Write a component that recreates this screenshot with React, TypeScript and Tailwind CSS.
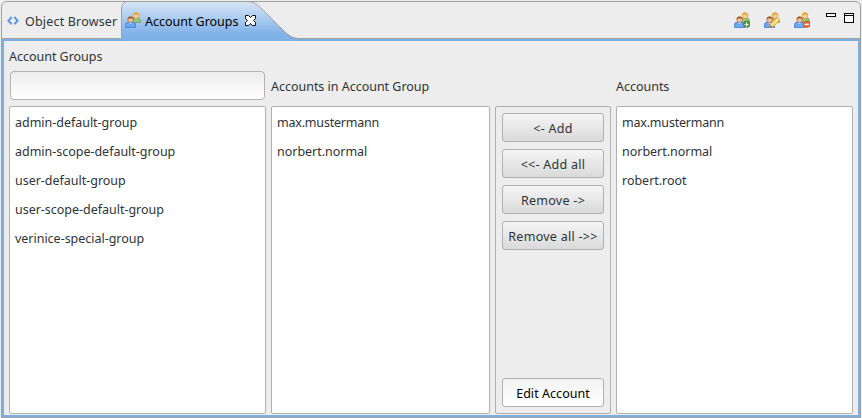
import React from 'react';

type Badge = 'add' | 'edit' | 'remove';

function People({ badge }: { badge?: Badge }) {
  return (
    <svg width="16" height="16" viewBox="0 0 16 16" className="block shrink-0">
      <path d="M7.5 10.5V8.6Q7.5 6 10 6h2.6Q15.5 6 15.5 9v1.5z" fill="#8fc878" stroke="#6aa656" strokeWidth=".8" />
      <circle cx="11" cy="3.8" r="2.8" fill="#f8cf98" stroke="#d9983c" strokeWidth=".7" />
      <path d="M7.9 4.1V3Q8.3.2 11 .2t3.1 2.6v1.5L13 2.7H9.2z" fill="#e8a838" />
      <path d="M.5 15.5V13Q.5 10 3.3 10h4.2q3 0 3 3v2.5z" fill="#68a8f4" stroke="#3f80d2" strokeWidth=".8" />
      <path d="M4 10.2h3l-1.5 2z" fill="#d9eaff" />
      <circle cx="5.6" cy="7.6" r="2.8" fill="#f3c29c" stroke="#b06c40" strokeWidth=".7" />
      <path d="M2.6 7.8V6.8Q3 4.4 5.6 4.4t3.1 2.4V8L7.6 6.6H3.8z" fill="#9a5a32" />
      {badge === 'add' && (
        <g>
          <circle cx="12.7" cy="12.3" r="3.2" fill="#4b9a35" stroke="#36792a" strokeWidth=".6" />
          <path d="M10.6 12.5h4M12.6 10.5v4" stroke="#fff" strokeWidth="1.2" />
        </g>
      )}
      {badge === 'edit' && (
        <g>
          <path d="M5.6 15.4l.9-3.8 6.6-6.1 2.7 2.7-6.5 6.4z" fill="#f9cf5e" stroke="#dba038" strokeWidth=".8" />
          <path d="M8 13l6.2-6" stroke="#fff0a9" strokeWidth="1.2" />
          <path d="M5.6 15.4l.5-1.8 1.5 1.2z" fill="#75502b" />
        </g>
      )}
      {badge === 'remove' && (
        <g>
          <circle cx="12.7" cy="12.3" r="3.3" fill="#ea652e" stroke="#c94515" strokeWidth=".6" />
          <path d="M10.5 12.4h4.3" stroke="#fff" strokeWidth="1.4" />
        </g>
      )}
    </svg>
  );
}

function Header() {
  return (
    <header className="relative flex h-[38px] shrink-0 pt-px">
      <svg width="862" height="41" viewBox="0 0 862 41" className="absolute left-0 top-0">
        <defs>
          <linearGradient id="activeTab" x1="0" y1="0" x2="0" y2="1">
            <stop offset="0" stopColor="#d6e5f6" />
            <stop offset=".8" stopColor="#83b3e8" />
            <stop offset="1" stopColor="#7dafe4" />
          </linearGradient>
        </defs>
        <path d="M1.5 41V7Q2 1.5 7 1.5H855Q860.5 2 860.5 7V41" fill="none" stroke="#a1a1a1" />
        <path d="M1.5 38.5H121M297 38.5H861" stroke="#a1a1a1" />
        <path d="M121.5 41V8Q122 2 128 2H247C255 2 259 6 264 11L283 30C289 36 293 38.5 300 38.5V41z" fill="url(#activeTab)" />
        <path d="M121.5 38.5V8Q122 1.5 128 1.5H247C255 1.5 259 6 264 11L283 30C289 36 293 38.5 300 38.5" fill="none" stroke="#a1a1a1" />
      </svg>
      <div className="relative flex w-[121px] items-center whitespace-nowrap pl-[7px] pt-[3px]">
        <svg width="12" height="10" viewBox="0 0 12 10" className="mr-[6px]" fill="none" stroke="#5a9ae6" strokeWidth="2">
          <path d="M4.7 1L1.4 4.7l3.3 3.6M7.3 1l3.3 3.7-3.3 3.6" />
        </svg>
        <span className="pt-[2px] tracking-[0.18px]">Object Browser</span>
      </div>
      <div className="relative flex items-center pl-[4px] pt-[3px] text-black">
        <div className="mb-[2px]"><People /></div>
        <span className="ml-1 w-[93px] whitespace-nowrap pt-[2px] tracking-[-0.02px]">Account Groups</span>
        <svg width="11" height="11" viewBox="0 0 11 11" className="mb-[2px] ml-[7px]">
          <path d="M.5.5h3l2 2 2-2h3v3l-2 2 2 2v3h-3l-2-2-2 2h-3v-3l2-2-2-2z" fill="#fff" stroke="#111" />
        </svg>
      </div>
      <div className="relative ml-auto flex pr-[8px] pt-[11px]">
        <div className="mr-[16px] flex gap-[14px]">
          <People badge="add" />
          <People badge="edit" />
          <People badge="remove" />
        </div>
        <div className="mt-px h-[4px] w-[10px] border border-black bg-white" />
        <div className="ml-[8px] mt-px h-[10px] w-[10px] border border-black bg-white">
          <div className="mt-px h-px bg-black" />
        </div>
      </div>
    </header>
  );
}

function List({ items, size }: { items: string[]; size: string }) {
  return (
    <ul className={`${size} h-[308px] rounded-[2px] border border-[#b0b0b0] bg-white pl-[5px] pt-px`}>
      {items.map((item) => (
        <li key={item} className={`flex h-[29px] items-center ${item.startsWith('max') ? 'tracking-[-0.2px]' : 'tracking-[-0.02px]'}`}>{item}</li>
      ))}
    </ul>
  );
}

function Button({ children, strong }: { children: string; strong?: boolean }) {
  return (
    <button
      className={`flex h-[29px] w-full shrink-0 items-center justify-center whitespace-nowrap rounded-[3px] border border-[#b0b0b0] bg-linear-to-b pt-[3px] leading-none ${
        strong ? 'mt-auto from-[#f3f3f3] to-white tracking-[0.05px] text-black' : 'from-[#f5f5f5] to-[#dadada] tracking-[0.28px]'
      }`}
    >
      {children}
    </button>
  );
}

export default function App() {
  return (
    <main className="flex h-[418px] w-[862px] flex-col overflow-hidden bg-[#ededed] font-['Noto_Sans',sans-serif] text-[12.5px] leading-[18px] text-[#2e3436]">
      <Header />
      <section className="mx-px mt-px flex h-[379px] w-[860px] flex-col border-x border-b border-[#a1a1a1]">
        <div className="flex h-full flex-col border-2 border-[#7dafe4] pl-[5px]">
          <h1 className="mt-[7px] h-[23px] tracking-[-0.02px]">Account Groups</h1>
          <div className="flex h-[35px]">
            <input
              aria-label="Account Groups"
              className="ml-px block h-[29px] w-[255px] rounded-[4px] border border-[#b3b3b3] bg-linear-to-b from-[#ededed] to-white outline-none"
            />
            <h2 className="ml-[6px] w-[345px] pt-[7px] tracking-[-0.02px]">Accounts in Account Group</h2>
            <h2 className="pt-[7px] tracking-[-0.02px]">Accounts</h2>
          </div>
          <div className="flex gap-[5px]">
            <List size="w-[257px]" items={['admin-default-group', 'admin-scope-default-group', 'user-default-group', 'user-scope-default-group', 'verinice-special-group']} />
            <List size="w-[219px]" items={['max.mustermann', 'norbert.normal']} />
            <div className="flex h-[308px] w-[116px] flex-col gap-[7px] rounded-[2px] border border-[#b0b0b0] p-[6px]">
              <Button>{'<- Add'}</Button>
              <Button>{'<<- Add all'}</Button>
              <Button>{'Remove ->'}</Button>
              <Button>{'Remove all ->>'}</Button>
              <Button strong>Edit Account</Button>
            </div>
            <List size="w-[237px]" items={['max.mustermann', 'norbert.normal', 'robert.root']} />
          </div>
        </div>
      </section>
    </main>
  );
}
